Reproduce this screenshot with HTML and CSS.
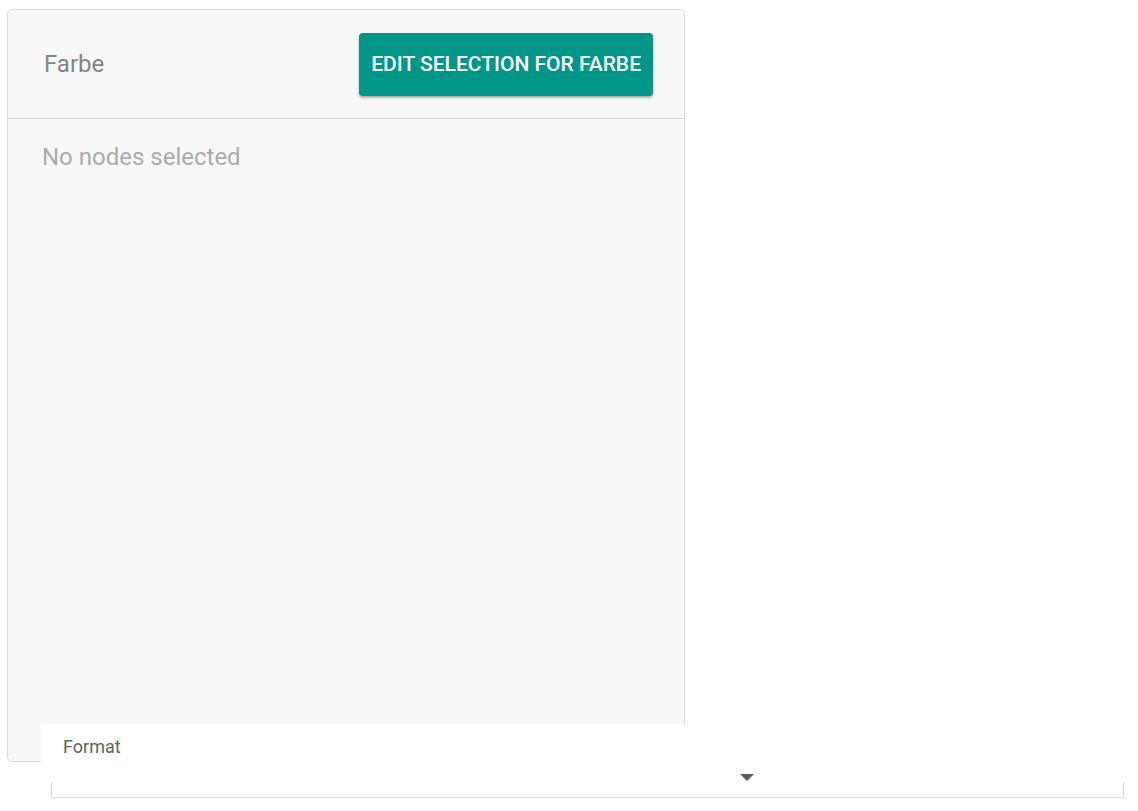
FILE: index.html
```html
<!DOCTYPE html>
<html>
<head>
<meta charset="utf-8">
<link rel="stylesheet" href="styles.css">
</head>
<body>
<div class="card">
  <div class="card-header">
    <span class="card-title">Farbe</span>
    <button class="btn">EDIT SELECTION FOR FARBE</button>
  </div>
  <div class="card-body">
    <p class="empty">No nodes selected</p>
  </div>
</div>
<div class="bottom-panel">
  <label class="field-label">Format</label>
  <div class="select-row">
    <span class="arrow"></span>
  </div>
  <div class="select-box"></div>
</div>
</body>
</html>
```
FILE: styles.css
```css
html, body {
  margin: 0;
  padding: 0;
  background: #ffffff;
  font-family: Roboto, "Liberation Sans", sans-serif;
}
body {
  padding: 9px 0 0 7px;
  width: 1138px;
  height: 811px;
  box-sizing: border-box;
  overflow: hidden;
}
.card {
  width: 678px;
  height: 753px;
  box-sizing: border-box;
  border: 1px solid #dcdcdc;
  border-radius: 5px;
  background: #f8f8f8;
  display: flex;
  flex-direction: column;
}
.card-header {
  height: 109px;
  box-sizing: border-box;
  border-bottom: 1px solid #d6d6d6;
  display: flex;
  align-items: center;
  justify-content: space-between;
  padding: 0 31px 0 36px;
}
.card-title {
  font-size: 24px;
  color: #808586;
}
.btn {
  height: 63px;
  padding: 0 12px;
  border: none;
  border-radius: 4px;
  background: #009688;
  color: #ffffff;
  font-family: Roboto, "Liberation Sans", sans-serif;
  font-size: 21px;
  font-weight: 500;
  box-shadow: 0 2px 3px rgba(0,0,0,0.25), 0 1px 1px rgba(0,0,0,0.12);
  cursor: pointer;
}
.card-body {
  padding: 24px 34px;
}
.empty {
  margin: 0;
  font-size: 24px;
  color: #a9adad;
}
.bottom-panel {
  position: fixed;
  left: 41px;
  top: 724px;
  right: 0;
  bottom: 0;
  background: #ffffff;
  display: flex;
  flex-direction: column;
  padding: 12px 14px 0 0;
}
.field-label {
  padding-left: 22px;
  font-size: 18px;
  color: #5f6464;
}
.select-row {
  height: 30px;
  display: flex;
  align-items: flex-end;
  padding-left: 699px;
  margin-top: -5px;
}
.arrow {
  width: 0;
  height: 0;
  border-left: 7px solid transparent;
  border-right: 7px solid transparent;
  border-top: 7px solid #5a6060;
  margin-bottom: 1px;
}
.select-box {
  margin-left: 10px;
  height: 15px;
  border: 1px solid #dcdcdc;
  border-top: none;
}
```
